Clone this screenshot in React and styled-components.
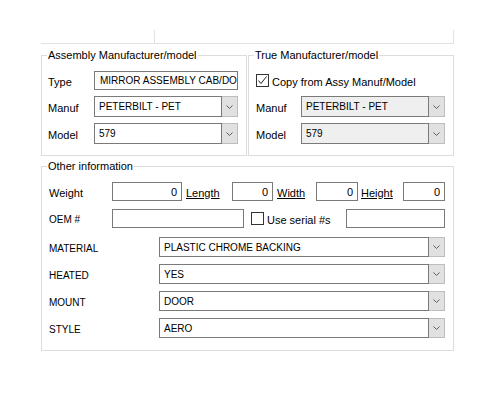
import React from 'react'
import styled, { createGlobalStyle } from 'styled-components'

const GlobalStyle = createGlobalStyle`
  body {
    margin: 0;
    background: #FFFFFF;
    font-family: "Liberation Sans", Arial, sans-serif;
    font-size: 11px;
    color: #000000;
  }
`

const Page = styled.div`
    width: 413px;
    padding: 30px 0 0 41px;
`

const TopStub = styled.div`
    box-sizing: border-box;
    height: 14px;
    border-right: 1px solid #e2e2e2;
    border-bottom: 1px solid #e2e2e2;
`

const StubCell = styled.div`
    width: 113px;
    height: 100%;
    border-right: 1px solid #e2e2e2;
`

const TopRow = styled.div`
    display: flex;
    gap: 1px;
    margin-top: 11px;
`

const GroupBox = styled.div`
    position: relative;
    box-sizing: border-box;
    width: ${p => p.$w}px;
    height: ${p => p.$h}px;
    border: 1px solid #dcdcdc;
    margin-top: ${p => p.$mt || 0}px;
`

const Legend = styled.span`
    position: absolute;
    top: -7px;
    left: 5px;
    padding: 0 1px;
    line-height: 13px;
    background: #FFFFFF;
    white-space: nowrap;
`

const FormGrid = styled.div`
    display: grid;
    grid-template-columns: ${p => p.$label}px 1fr;
    grid-template-rows: 19px 21px 21px;
    row-gap: 6px;
    align-items: center;
    padding: 15px 8px 0 ${p => p.$pl}px;
`

const Label = styled.span`
    font-size: ${p => (p.$caps ? 10 : 11)}px;
    white-space: nowrap;
    text-decoration: ${p => (p.$link ? 'underline' : 'none')};
    padding-left: ${p => p.$pl || 0}px;
    padding-top: 2px;
    width: ${p => (p.$w ? `${p.$w}px` : 'auto')};
    flex-shrink: 0;
    box-sizing: border-box;
`

const TextBox = styled.div`
    box-sizing: border-box;
    display: flex;
    align-items: center;
    justify-content: ${p => (p.$right ? 'flex-end' : 'flex-start')};
    width: ${p => (p.$w ? `${p.$w}px` : 'auto')};
    height: ${p => p.$h || 19}px;
    padding: 0 ${p => (p.$tight ? 0 : 4)}px 0 5px;
    border: 1px solid #7a7a7a;
    background: #FFFFFF;
    font-size: ${p => (p.$caps ? 10 : 11)}px;
    white-space: nowrap;
    overflow: hidden;
    flex-shrink: 0;
`

const ComboWrap = styled.div`
    display: flex;
    height: ${p => p.$h || 21}px;
    width: ${p => (p.$w ? `${p.$w}px` : 'auto')};
    flex-shrink: 0;
`

const ComboField = styled.div`
    flex: 1;
    display: flex;
    align-items: center;
    box-sizing: border-box;
    padding-left: 4px;
    border: 1px solid #7a7a7a;
    background: ${p => (p.$disabled ? '#efefef' : '#FFFFFF')};
    font-size: 10px;
    white-space: nowrap;
    overflow: hidden;
`

const DropButton = styled.div`
    box-sizing: border-box;
    width: 16px;
    display: flex;
    align-items: center;
    justify-content: center;
    background: #e1e1e1;
    border: 1px solid #bdbdbd;
    border-left: none;
`

const CheckRow = styled.div`
    grid-column: 1 / span 2;
    display: flex;
    align-items: center;
    gap: 3px;
    width: ${p => (p.$w ? `${p.$w}px` : 'auto')};
    margin-left: ${p => p.$ml || 0}px;
    flex-shrink: 0;
`

const Box = styled.span`
    box-sizing: border-box;
    width: 13px;
    height: 13px;
    border: 1px solid #333333;
    background: #FFFFFF;
    display: flex;
    align-items: center;
    justify-content: center;
    flex-shrink: 0;
`

const OtherBody = styled.div`
    display: flex;
    flex-direction: column;
    padding: 15px 8px 0 7px;
`

const Row = styled.div`
    display: flex;
    align-items: center;
    height: ${p => p.$h}px;
    margin-bottom: ${p => p.$mb || 0}px;
`

function Chevron() {
  return (
    <svg width="7" height="4" viewBox="0 0 7 4">
      <polyline points="0.5,0.5 3.5,3.5 6.5,0.5" fill="none" stroke="#5e5e5e" strokeWidth="1" />
    </svg>
  )
}

function Combo({ value, disabled, w, h }) {
  return (
    <ComboWrap $w={w} $h={h}>
      <ComboField $disabled={disabled}>{value}</ComboField>
      <DropButton><Chevron /></DropButton>
    </ComboWrap>
  )
}

function CheckBox({ checked }) {
  return (
    <Box>
      {checked && (
        <svg width="11" height="11" viewBox="0 0 11 11">
          <polyline points="1.5,5.5 4,8.5 9.5,1.5" fill="none" stroke="#222" strokeWidth="1" />
        </svg>
      )}
    </Box>
  )
}

const attributes = [
  { label: 'MATERIAL', value: 'PLASTIC CHROME BACKING' },
  { label: 'HEATED', value: 'YES' },
  { label: 'MOUNT', value: 'DOOR' },
  { label: 'STYLE', value: 'AERO' },
]

export default function App() {
  return (
    <Page>
      <GlobalStyle />
      <TopStub><StubCell /></TopStub>

      <TopRow>
        <GroupBox $w={206} $h={101}>
          <Legend>Assembly Manufacturer/model</Legend>
          <FormGrid $label={46} $pl={6}>
            <Label>Type</Label>
            <TextBox $caps $tight>MIRROR ASSEMBLY CAB/DO</TextBox>
            <Label>Manuf</Label>
            <Combo value="PETERBILT - PET" />
            <Label>Model</Label>
            <Combo value="579" />
          </FormGrid>
        </GroupBox>

        <GroupBox $w={206} $h={101}>
          <Legend>True Manufacturer/model</Legend>
          <FormGrid $label={45} $pl={7}>
            <CheckRow>
              <CheckBox checked />
              <Label>Copy from Assy Manuf/Model</Label>
            </CheckRow>
            <Label>Manuf</Label>
            <Combo value="PETERBILT - PET" disabled />
            <Label>Model</Label>
            <Combo value="579" disabled />
          </FormGrid>
        </GroupBox>
      </TopRow>

      <GroupBox $w={413} $h={185} $mt={10}>
        <Legend>Other information</Legend>
        <OtherBody>
          <Row $h={19} $mb={8}>
            <Label $w={63}>Weight</Label>
            <TextBox $w={70} $right>0</TextBox>
            <Label $w={50} $pl={4} $link>Length</Label>
            <TextBox $w={41} $right>0</TextBox>
            <Label $w={43} $pl={4} $link>Width</Label>
            <TextBox $w={42} $right>0</TextBox>
            <Label $w={45} $pl={3} $link>Height</Label>
            <TextBox $w={42} $right>0</TextBox>
          </Row>
          <Row $h={19} $mb={9}>
            <Label $w={63} $caps>OEM #</Label>
            <TextBox $w={132} />
            <CheckRow $ml={7} $w={95}>
              <CheckBox />
              <Label>Use serial #s</Label>
            </CheckRow>
            <TextBox $w={99} />
          </Row>
          {attributes.map(a => (
            <Row key={a.label} $h={20} $mb={7}>
              <Label $w={110} $caps>{a.label}</Label>
              <Combo value={a.value} w={286} h={20} />
            </Row>
          ))}
        </OtherBody>
      </GroupBox>
    </Page>
  )
}
